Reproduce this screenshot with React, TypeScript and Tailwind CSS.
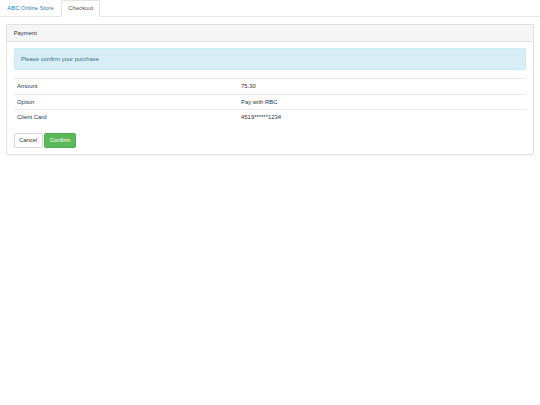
import React from "react";

const rows = [
  { label: "Amount", value: "75.30" },
  { label: "Option", value: "Pay with RBC" },
  { label: "Client Card", value: "4519******1234" },
];

export default function App() {
  return (
    <div
      className="min-h-screen bg-white text-[5.9px] leading-[8.44px] text-[#333]"
      style={{ fontFamily: '"Liberation Sans", Arial, sans-serif' }}
    >
      {/* Tabs */}
      <ul className="flex border-b border-[#e6e6e6]">
        <li className="-mb-px">
          <a className="block border border-transparent px-[6.33px] py-[3.38px] text-[#337ab7]">
            ABC Online Store
          </a>
        </li>
        <li className="-mb-px">
          <a className="block rounded-t-[1.7px] border border-[#e3e3e3] border-b-transparent bg-white px-[6px] py-[3.38px] text-[#555]">
            Checkout
          </a>
        </li>
      </ul>

      <div className="px-[6.33px]">
        {/* Panel */}
        <div className="mt-[6.8px] rounded-[1.7px] border border-[#e0e0e0] bg-white shadow-[0_0.4px_0.4px_rgba(0,0,0,0.05)]">
          <div className="rounded-t-[1.7px] border-b border-[#e3e3e3] bg-[#f5f5f5] px-[6.33px] py-[3.6px]">
            Payment
          </div>
          <div className="p-[6.33px]">
            <div className="mb-[8.44px] rounded-[1.7px] border border-[#c6ebf3] bg-[#d9edf7] px-[6.33px] py-[5.6px] text-[#31708f]">
              Please confirm your purchase
            </div>

            <table className="mb-[8.44px] w-full border-collapse">
              <tbody>
                {rows.map((r) => (
                  <tr key={r.label} className="border-t border-[#e8e8e8]">
                    <td className="w-[43.7%] px-[3.38px] py-[3.1px]">{r.label}</td>
                    <td className="px-[3.38px] py-[3.1px]">{r.value}</td>
                  </tr>
                ))}
              </tbody>
            </table>

            <div className="flex">
              <button className="rounded-[1.7px] border border-[#d6d6d6] bg-white px-[4.3px] py-[1.93px] text-[#333]">
                Cancel
              </button>
              <button className="ml-[1.7px] rounded-[1.7px] border border-[#4cae4c] bg-[#5cb85c] px-[4.4px] py-[1.93px] text-white">
                Confirm
              </button>
            </div>
          </div>
        </div>
      </div>
    </div>
  );
}
